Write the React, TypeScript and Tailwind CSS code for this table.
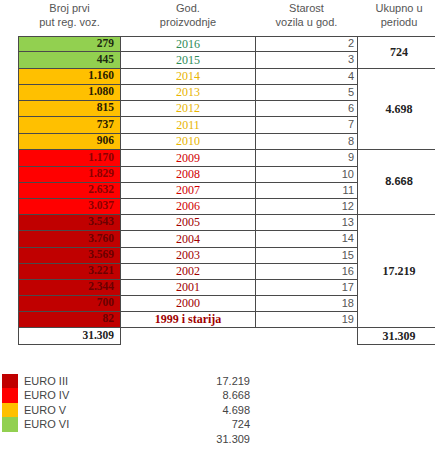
import React from "react";

type Row = {
  n: string;
  y: string;
  age: number;
  bg: string;
  nc: string;
  yc: string;
  h: string;
};

const G = "bg-[#92d050]";
const O = "bg-[#ffc000]";
const R = "bg-[#ff0000]";
const D = "bg-[#c00000]";

const rows: Row[] = [
  { n: "279", y: "2016", age: 2, bg: G, nc: "text-[#1c2a10]", yc: "text-[#2e8b57]", h: "h-[15px]" },
  { n: "445", y: "2015", age: 3, bg: G, nc: "text-[#1c2a10]", yc: "text-[#2e8b57]", h: "h-[17px]" },
  { n: "1.160", y: "2014", age: 4, bg: O, nc: "text-[#2a2000]", yc: "text-[#e8b400]", h: "h-[16px]" },
  { n: "1.080", y: "2013", age: 5, bg: O, nc: "text-[#2a2000]", yc: "text-[#e8b400]", h: "h-[16px]" },
  { n: "815", y: "2012", age: 6, bg: O, nc: "text-[#2a2000]", yc: "text-[#e8b400]", h: "h-[16px]" },
  { n: "737", y: "2011", age: 7, bg: O, nc: "text-[#2a2000]", yc: "text-[#e8b400]", h: "h-[17px]" },
  { n: "906", y: "2010", age: 8, bg: O, nc: "text-[#2a2000]", yc: "text-[#e8b400]", h: "h-[16px]" },
  { n: "1.170", y: "2009", age: 9, bg: R, nc: "text-[#8a0000]", yc: "text-[#d00000]", h: "h-[17px]" },
  { n: "1.829", y: "2008", age: 10, bg: R, nc: "text-[#8a0000]", yc: "text-[#d00000]", h: "h-[16px]" },
  { n: "2.632", y: "2007", age: 11, bg: R, nc: "text-[#8a0000]", yc: "text-[#d00000]", h: "h-[16px]" },
  { n: "3.037", y: "2006", age: 12, bg: R, nc: "text-[#8a0000]", yc: "text-[#d00000]", h: "h-[16px]" },
  { n: "3.543", y: "2005", age: 13, bg: D, nc: "text-[#6a0000]", yc: "text-[#a00000]", h: "h-[16px]" },
  { n: "3.760", y: "2004", age: 14, bg: D, nc: "text-[#6a0000]", yc: "text-[#a00000]", h: "h-[17px]" },
  { n: "3.569", y: "2003", age: 15, bg: D, nc: "text-[#6a0000]", yc: "text-[#a00000]", h: "h-[16px]" },
  { n: "3.221", y: "2002", age: 16, bg: D, nc: "text-[#6a0000]", yc: "text-[#a00000]", h: "h-[16px]" },
  { n: "2.344", y: "2001", age: 17, bg: D, nc: "text-[#6a0000]", yc: "text-[#a00000]", h: "h-[16px]" },
  { n: "700", y: "2000", age: 18, bg: D, nc: "text-[#6a0000]", yc: "text-[#a00000]", h: "h-[16px]" },
  { n: "82", y: "1999 i starija", age: 19, bg: D, nc: "text-[#6a0000]", yc: "text-[#a00000]", h: "h-[16px]" },
];

const groups: Record<number, { span: number; v: string; cls: string }> = {
  0: { span: 2, v: "724", cls: "font-['Liberation_Serif',serif] font-bold text-[12px]" },
  2: { span: 5, v: "4.698", cls: "font-['Liberation_Serif',serif] font-bold text-[12px]" },
  7: { span: 4, v: "8.668", cls: "font-['Liberation_Sans',sans-serif] font-bold text-[11px]" },
  11: { span: 7, v: "17.219", cls: "font-['Liberation_Serif',serif] font-bold text-[12px]" },
};

const legend = [
  { c: "bg-[#c00000]", l: "EURO III", v: "17.219" },
  { c: "bg-[#ff0000]", l: "EURO IV", v: "8.668" },
  { c: "bg-[#ffc000]", l: "EURO V", v: "4.698" },
  { c: "bg-[#92d050]", l: "EURO VI", v: "724" },
];

export default function App() {
  const head =
    "align-top p-0 pt-[2px] text-center font-['Liberation_Sans',sans-serif] text-[11px] leading-[13.5px] text-[#555] font-normal";
  return (
    <div className="w-[435px] h-[449px] overflow-hidden bg-white relative">
      <div className="pl-[18px]">
        <table className="table-fixed border-collapse w-[422px]">
          <colgroup>
            <col className="w-[102px]" />
            <col className="w-[135px]" />
            <col className="w-[102px]" />
            <col className="w-[83px]" />
          </colgroup>
          <thead>
            <tr className="h-[36px]">
              <th className={head}>
                Broj prvi
                <br />
                put reg. voz.
              </th>
              <th className={head}>
                God.
                <br />
                proizvodnje
              </th>
              <th className={head}>
                Starost
                <br />
                vozila u god.
              </th>
              <th className={head}>
                Ukupno u
                <br />
                periodu
              </th>
            </tr>
          </thead>
          <tbody>
            {rows.map((r, i) => (
              <tr key={i} className={r.h}>
                <td
                  className={`${r.bg} ${r.nc} border border-[#4a4a4a] p-0 pr-[6px] text-right font-['Liberation_Serif',serif] font-bold text-[11.5px] leading-none`}
                >
                  {r.n}
                </td>
                <td
                  className={`${r.yc} border border-[#4a4a4a] p-0 text-center font-['Liberation_Serif',serif] text-[12px] leading-none ${
                    r.age === 19 ? "font-bold" : "font-normal"
                  }`}
                >
                  {r.y}
                </td>
                <td className="border border-[#4a4a4a] p-0 pr-[3px] text-right font-['Liberation_Sans',sans-serif] text-[11px] leading-none text-[#555]">
                  {r.age}
                </td>
                {groups[i] && (
                  <td
                    rowSpan={groups[i].span}
                    className={`border border-[#4a4a4a] p-0 text-center align-middle text-[#222] ${groups[i].cls}`}
                  >
                    {groups[i].v}
                  </td>
                )}
              </tr>
            ))}
            <tr className="h-[17px]">
              <td className="border border-[#4a4a4a] p-0 pr-[6px] text-right font-['Liberation_Serif',serif] font-bold text-[11.5px] leading-none text-[#222]">
                31.309
              </td>
              <td className="p-0" />
              <td className="p-0" />
              <td className="border border-[#4a4a4a] p-0 text-center font-['Liberation_Serif',serif] font-bold text-[12px] leading-none text-[#222]">
                31.309
              </td>
            </tr>
          </tbody>
        </table>
      </div>

      <div className="mt-[29px] pl-[2px] w-[250px] font-['Liberation_Sans',sans-serif] text-[11px] leading-[14.5px] text-[#444]">
        {legend.map((g) => (
          <div key={g.l} className="flex items-center h-[14.5px]">
            <div className={`${g.c} w-[16px] h-[14.5px]`} />
            <div className="ml-[6px] flex-1">{g.l}</div>
            <div className="text-right">{g.v}</div>
          </div>
        ))}
        <div className="flex h-[14.5px]">
          <div className="flex-1" />
          <div className="text-right">31.309</div>
        </div>
      </div>
    </div>
  );
}
